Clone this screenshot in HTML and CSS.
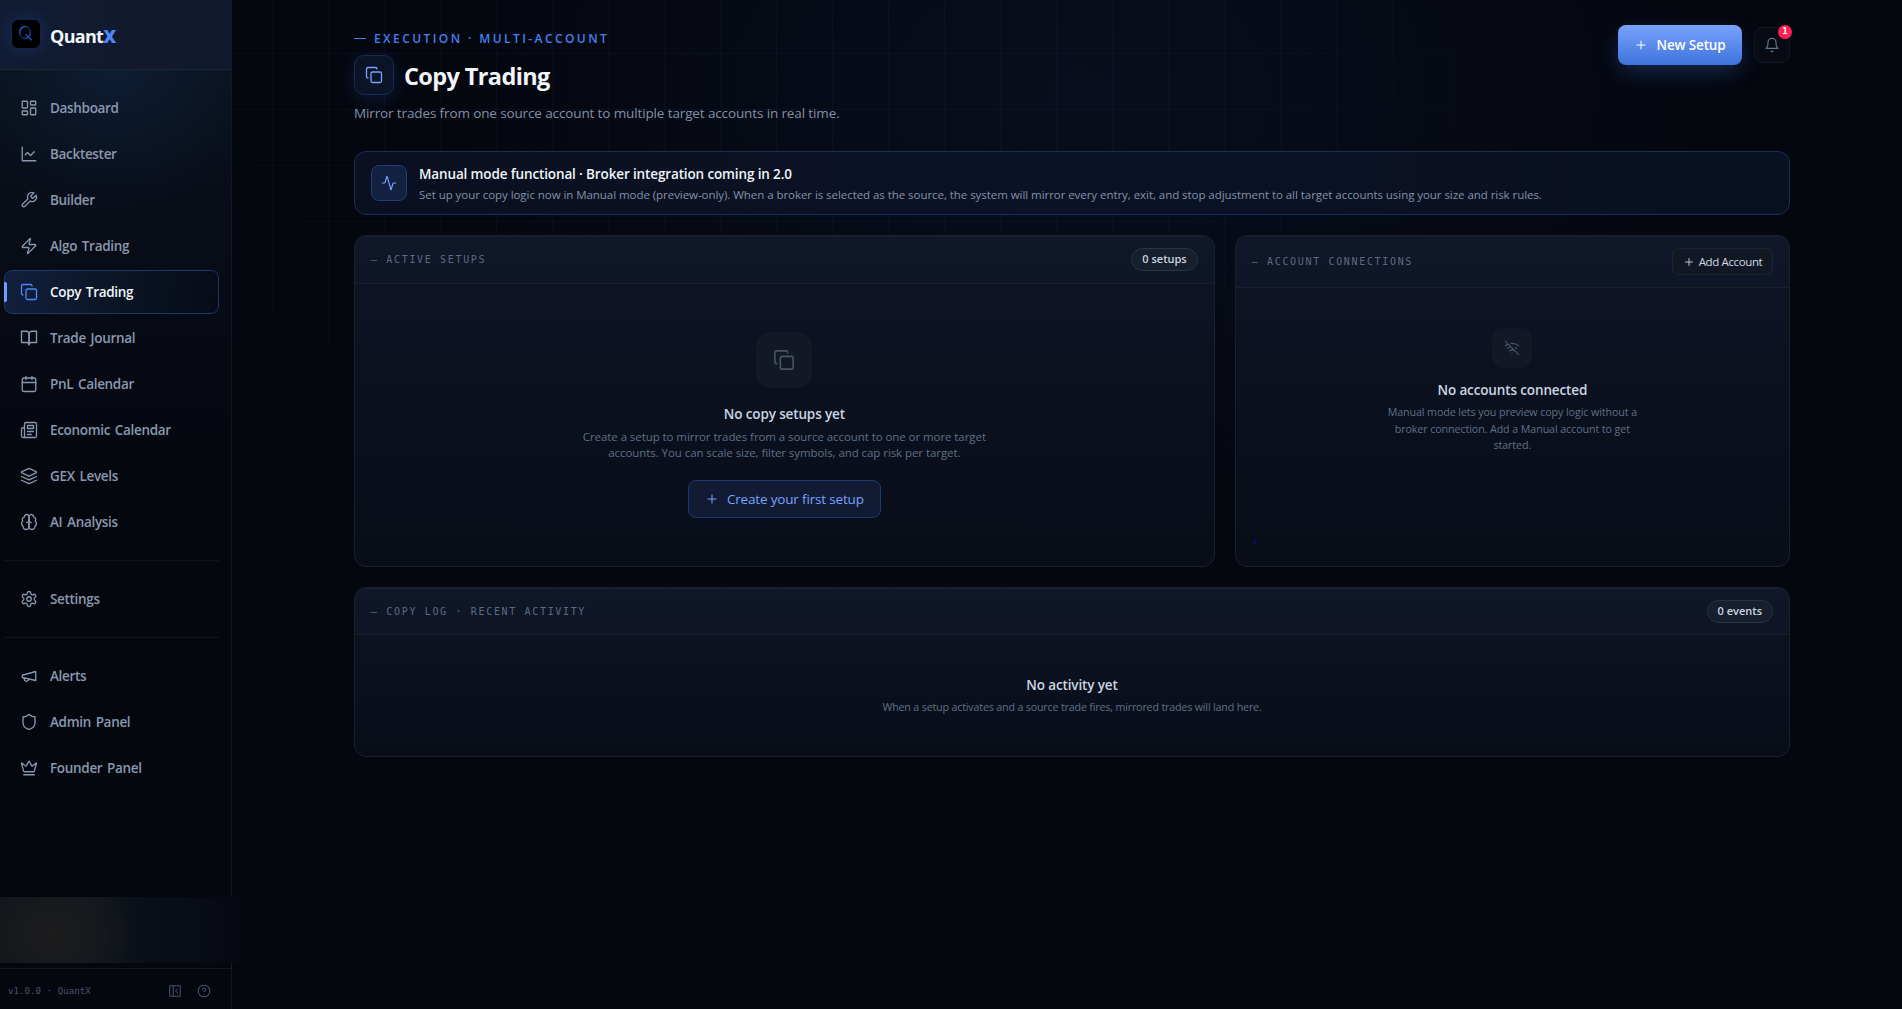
FILE: index.html
```html
<!DOCTYPE html>
<html lang="en">
<head>
<meta charset="utf-8">
<title>QuantX · Copy Trading</title>
<link rel="stylesheet" href="styles.css">
</head>
<body>
<svg width="0" height="0" class="sprite" aria-hidden="true">
  <symbol id="i-copy" viewBox="0 0 24 24"><rect width="14" height="14" x="8" y="8" rx="2"/><path d="M4 16c-1.1 0-2-.9-2-2V4c0-1.1.9-2 2-2h10c1.1 0 2 .9 2 2"/></symbol>
  <symbol id="i-plus" viewBox="0 0 24 24"><path d="M5 12h14M12 5v14"/></symbol>
</svg>
<div class="app">
  <aside class="sidebar">
    <div class="brand">
      <div class="brand-mark"><svg width="16" height="18" viewBox="0 0 16 18"><defs><linearGradient id="q" x1="0" y1="0" x2="1" y2="1"><stop offset="0" stop-color="#3b7cff"/><stop offset=".5" stop-color="#0a1a5c"/><stop offset="1" stop-color="#2f55d8"/></linearGradient></defs><ellipse cx="7" cy="7.5" rx="5.2" ry="6" fill="none" stroke="url(#q)" stroke-width="1.5"/><path d="M7.5 9.5c2 .6 3.5 4.8 6.5 5.6" fill="none" stroke="#2447b8" stroke-width="1.5"/></svg></div>
      <div class="brand-name">Quant<span>X</span></div>
    </div>
    <nav class="nav">
      <a class="item"><svg class="ico" viewBox="0 0 24 24"><rect width="7" height="9" x="3" y="3" rx="1"/><rect width="7" height="5" x="14" y="3" rx="1"/><rect width="7" height="9" x="14" y="12" rx="1"/><rect width="7" height="5" x="3" y="16" rx="1"/></svg><span>Dashboard</span></a>
      <a class="item"><svg class="ico" viewBox="0 0 24 24"><path d="M3 3v18h18"/><path d="m19 9-5 5-4-4-3 3"/></svg><span>Backtester</span></a>
      <a class="item"><svg class="ico" viewBox="0 0 24 24"><path d="M14.7 6.3a1 1 0 0 0 0 1.4l1.6 1.6a1 1 0 0 0 1.4 0l3.77-3.77a6 6 0 0 1-7.94 7.94l-6.91 6.91a2.12 2.12 0 0 1-3-3l6.91-6.91a6 6 0 0 1 7.94-7.94l-3.76 3.76z"/></svg><span>Builder</span></a>
      <a class="item"><svg class="ico" viewBox="0 0 24 24"><path d="M4 14a1 1 0 0 1-.78-1.63l9.9-10.2a.5.5 0 0 1 .86.46l-1.92 6.02A1 1 0 0 0 13 10h7a1 1 0 0 1 .78 1.63l-9.9 10.2a.5.5 0 0 1-.86-.46l1.92-6.02A1 1 0 0 0 11 14z"/></svg><span>Algo Trading</span></a>
      <a class="item active"><svg class="ico"><use href="#i-copy"/></svg><span>Copy Trading</span></a>
      <a class="item"><svg class="ico" viewBox="0 0 24 24"><path d="M2 3h6a4 4 0 0 1 4 4v14a3 3 0 0 0-3-3H2z"/><path d="M22 3h-6a4 4 0 0 0-4 4v14a3 3 0 0 1 3-3h7z"/></svg><span>Trade Journal</span></a>
      <a class="item"><svg class="ico" viewBox="0 0 24 24"><path d="M8 2v4M16 2v4M3 10h18"/><rect width="18" height="18" x="3" y="4" rx="2"/></svg><span>PnL Calendar</span></a>
      <a class="item"><svg class="ico" viewBox="0 0 24 24"><path d="M4 22h16a2 2 0 0 0 2-2V4a2 2 0 0 0-2-2H8a2 2 0 0 0-2 2v16a2 2 0 0 1-2 2Zm0 0a2 2 0 0 1-2-2v-9c0-1.1.9-2 2-2h2"/><path d="M18 14h-8M15 18h-5M10 6h8v4h-8V6Z"/></svg><span>Economic Calendar</span></a>
      <a class="item"><svg class="ico" viewBox="0 0 24 24"><path d="m12.83 2.18a2 2 0 0 0-1.66 0L2.6 6.08a1 1 0 0 0 0 1.83l8.58 3.91a2 2 0 0 0 1.66 0l8.58-3.9a1 1 0 0 0 0-1.83Z"/><path d="m22 17.65-9.17 4.16a2 2 0 0 1-1.66 0L2 17.65"/><path d="m22 12.65-9.17 4.16a2 2 0 0 1-1.66 0L2 12.65"/></svg><span>GEX Levels</span></a>
      <a class="item"><svg class="ico" viewBox="0 0 24 24"><path d="M12 5a3 3 0 1 0-5.997.125 4 4 0 0 0-2.526 5.77 4 4 0 0 0 .556 6.588A4 4 0 1 0 12 18Z"/><path d="M12 5a3 3 0 1 1 5.997.125 4 4 0 0 1 2.526 5.77 4 4 0 0 1-.556 6.588A4 4 0 1 1 12 18Z"/><path d="M15 13a4.5 4.5 0 0 1-3-4 4.5 4.5 0 0 1-3 4"/></svg><span>AI Analysis</span></a>
      <hr>
      <a class="item"><svg class="ico" viewBox="0 0 24 24"><path d="M12.22 2h-.44a2 2 0 0 0-2 2v.18a2 2 0 0 1-1 1.73l-.43.25a2 2 0 0 1-2 0l-.15-.08a2 2 0 0 0-2.73.73l-.22.38a2 2 0 0 0 .73 2.73l.15.1a2 2 0 0 1 1 1.72v.51a2 2 0 0 1-1 1.74l-.15.09a2 2 0 0 0-.73 2.73l.22.38a2 2 0 0 0 2.73.73l.15-.08a2 2 0 0 1 2 0l.43.25a2 2 0 0 1 1 1.73V20a2 2 0 0 0 2 2h.44a2 2 0 0 0 2-2v-.18a2 2 0 0 1 1-1.73l.43-.25a2 2 0 0 1 2 0l.15.08a2 2 0 0 0 2.73-.73l.22-.39a2 2 0 0 0-.73-2.73l-.15-.08a2 2 0 0 1-1-1.74v-.5a2 2 0 0 1 1-1.74l.15-.09a2 2 0 0 0 .73-2.73l-.22-.38a2 2 0 0 0-2.73-.73l-.15.08a2 2 0 0 1-2 0l-.43-.25a2 2 0 0 1-1-1.73V4a2 2 0 0 0-2-2z"/><circle cx="12" cy="12" r="3"/></svg><span>Settings</span></a>
      <hr>
      <a class="item"><svg class="ico" viewBox="0 0 24 24"><path d="m3 11 18-5v12L3 14v-3z"/><path d="M11.6 16.8a3 3 0 1 1-5.8-1.6"/></svg><span>Alerts</span></a>
      <a class="item"><svg class="ico" viewBox="0 0 24 24"><path d="M20 13c0 5-3.5 7.5-7.66 8.95a1 1 0 0 1-.67-.01C7.5 20.5 4 18 4 13V6a1 1 0 0 1 1-1c2 0 4.5-1.2 6.24-2.72a1.17 1.17 0 0 1 1.52 0C14.51 3.81 17 5 19 5a1 1 0 0 1 1 1z"/></svg><span>Admin Panel</span></a>
      <a class="item"><svg class="ico" viewBox="0 0 24 24"><path d="M11.562 3.266a.5.5 0 0 1 .876 0L15.39 8.87a1 1 0 0 0 1.516.294L21.183 5.5a.5.5 0 0 1 .798.519l-2.834 10.246a1 1 0 0 1-.956.734H5.81a1 1 0 0 1-.957-.734L2.02 6.02a.5.5 0 0 1 .798-.519l4.276 3.664a1 1 0 0 0 1.516-.294zM5 21h14"/></svg><span>Founder Panel</span></a>
    </nav>
    <div class="account"></div>
    <footer class="side-foot">
      <span class="version">v1.0.0 · QuantX</span>
      <svg class="ico s14" viewBox="0 0 24 24"><rect width="18" height="18" x="3" y="3" rx="1"/><path d="M9 3v18M16 15l-3-3 3-3"/></svg>
      <svg class="ico s14" viewBox="0 0 24 24"><circle cx="12" cy="12" r="10"/><path d="M9.09 9a3 3 0 0 1 5.83 1c0 2-3 3-3 3M12 17h.01"/></svg>
    </footer>
  </aside>

  <main class="main">
    <header class="page-head">
      <div>
        <div class="eyebrow"><i></i>EXECUTION · MULTI-ACCOUNT</div>
        <div class="title-row">
          <div class="title-ico"><svg class="ico"><use href="#i-copy"/></svg></div>
          <h1>Copy Trading</h1>
        </div>
        <p class="subtitle">Mirror trades from one source account to multiple target accounts in real time.</p>
      </div>
      <div class="actions">
        <button class="btn-primary"><svg class="ico s14"><use href="#i-plus"/></svg><span>New Setup</span></button>
        <button class="bell"><svg class="ico s16" viewBox="0 0 24 24"><path d="M6 8a6 6 0 0 1 12 0c0 7 3 9 3 9H3s3-2 3-9M10.3 21a1.94 1.94 0 0 0 3.4 0"/></svg><span class="badge">1</span></button>
      </div>
    </header>

    <section class="banner">
      <div class="banner-ico"><svg class="ico s16" viewBox="0 0 24 24"><path d="M22 12h-2.48a2 2 0 0 0-1.93 1.46l-2.35 8.36a.25.25 0 0 1-.48 0L9.24 2.18a.25.25 0 0 0-.48 0l-2.35 8.36A2 2 0 0 1 4.49 12H2"/></svg></div>
      <div>
        <h2>Manual mode functional · Broker integration coming in 2.0</h2>
        <p>Set up your copy logic now in Manual mode (preview-only). When a broker is selected as the source, the system will mirror every entry, exit, and stop adjustment to all target accounts using your size and risk rules.</p>
      </div>
    </section>

    <div class="grid">
      <section class="card">
        <div class="card-head"><span class="label">— ACTIVE SETUPS</span><span class="pill">0 setups</span></div>
        <div class="empty setups">
          <div class="empty-ico"><svg class="ico"><use href="#i-copy"/></svg></div>
          <h3>No copy setups yet</h3>
          <p>Create a setup to mirror trades from a source account to one or more target<br>accounts. You can scale size, filter symbols, and cap risk per target.</p>
          <button class="btn-soft"><svg class="ico s14"><use href="#i-plus"/></svg><span>Create your first setup</span></button>
        </div>
      </section>
      <section class="card">
        <div class="card-head"><span class="label">— ACCOUNT CONNECTIONS</span><button class="btn-ghost"><svg class="ico"><use href="#i-plus"/></svg><span>Add Account</span></button></div>
        <div class="empty accounts">
          <div class="empty-ico"><svg class="ico s16" viewBox="0 0 24 24"><path d="M12 20h.01M8.5 16.429a5 5 0 0 1 7 0M5 12.859a10 10 0 0 1 5.17-2.69M19 12.859a10 10 0 0 0-2.007-1.523M2 8.82a15 15 0 0 1 4.177-2.643M22 8.82a15 15 0 0 0-11.288-3.764M2 2l20 20"/></svg></div>
          <h3>No accounts connected</h3>
          <p>Manual mode lets you preview copy logic without a<br>broker connection. Add a Manual account to get<br>started.</p>
          <i class="dot"></i>
        </div>
      </section>
    </div>

    <section class="card log">
      <div class="card-head"><span class="label">— COPY LOG · RECENT ACTIVITY</span><span class="pill">0 events</span></div>
      <div class="empty activity">
        <h3>No activity yet</h3>
        <p>When a setup activates and a source trade fires, mirrored trades will land here.</p>
      </div>
    </section>
  </main>
</div>
</body>
</html>
```
FILE: styles.css
```css
* { box-sizing: border-box; }
body {
  margin: 0;
  height: 100vh;
  overflow: hidden;
  background: #05070f;
  color: #f1f5f9;
  font-family: "Open Sans", "Noto Sans", sans-serif;
}
h1, h2, h3, p { margin: 0; }
button { font: inherit; color: inherit; padding: 0; cursor: pointer; }
.sprite { position: absolute; }
.ico { width: 18px; height: 18px; flex: none; fill: none; stroke: currentColor; stroke-width: 1.75; stroke-linecap: round; stroke-linejoin: round; }
.s14 { width: 14px; height: 14px; }
.s16 { width: 16px; height: 16px; }

.app { display: flex; height: 100vh; position: relative; isolation: isolate;
  background: radial-gradient(ellipse 620px 420px at 1080px 90px, rgba(20, 50, 100, .16), transparent 100%); }
/* faint 56px grid, fading out towards the edges */
.app::before {
  content: ""; position: absolute; inset: 0; z-index: -1;
  background-image:
    linear-gradient(to right, rgba(130, 160, 240, .042) 1px, transparent 1px),
    linear-gradient(to bottom, rgba(130, 160, 240, .042) 1px, transparent 1px);
  background-size: 56px 56px;
  background-position: 48px 53px;
  -webkit-mask-image: radial-gradient(ellipse 1150px 760px at 760px 0, #000 35%, transparent 92%);
  mask-image: radial-gradient(ellipse 1150px 760px at 760px 0, #000 35%, transparent 92%);
}

.sidebar {
  width: 232px; flex: none; display: flex; flex-direction: column;
  border-right: 1px solid #141821;
  background:
    radial-gradient(ellipse 150px 150px at 115px 60px, rgba(25, 65, 125, .26), transparent),
    linear-gradient(180deg, #0b131d 0, #080d18 220px, #05070f 460px);
}
.brand { height: 70px; padding: 0 0 1px 12px; display: flex; align-items: center; gap: 10px;
  border-bottom: 1px solid #1b2637;
  background: linear-gradient(90deg, #101c33, #12192d 60%, #12192c); }
.brand-mark { width: 28px; height: 28px; border-radius: 6px; background: #000; display: grid; place-items: center; box-shadow: 0 0 18px rgba(70, 120, 255, .24); }
.brand-name { font-size: 18px; font-weight: 700; letter-spacing: -.7px; line-height: 24px; margin-top: 3px; }
.brand-name span { color: #4d86f8; font-weight: 800; }

.nav { flex: 1; display: flex; flex-direction: column; gap: 2px; padding: 16px 12px 0 4px; }
.item { height: 44px; flex: none; display: flex; align-items: center; gap: 12px; padding: 0 15px; border: 1px solid transparent; border-radius: 8px;
  color: #8a98ae; font-size: 13.5px; font-weight: 600; letter-spacing: -.32px; word-spacing: 1.5px; }
.item.active { position: relative; color: #f1f5f9; border-color: #1c3769;
  background: linear-gradient(100deg, #11203d, #0b1526 50%, #070b16); }
.item.active .ico { color: #4d86f8; }
.item.active::before { content: ""; position: absolute; left: -1px; top: 11px; width: 3px; height: 20px; border-radius: 0 2px 2px 0; background: #6f9cff; }
.nav hr { width: 100%; height: 1px; flex: none; border: 0; margin: 14px 0; background: #10141d; }
.account { width: 240px; height: 66px; margin-bottom: 5px; flex: none;
  background:
    radial-gradient(ellipse 85px 75px at 50px 38px, #1c1c1d, rgba(28, 28, 29, .6) 45%, transparent),
    linear-gradient(90deg, #0e131a 0, #11161f 38%, #0a0f17 62%, #060911); }
.side-foot { height: 41px; flex: none; display: flex; align-items: center; gap: 15px; padding: 4px 20px 0 8px; border-top: 1px solid #141821; color: #475569; }
.version { flex: 1; font: 9px "DejaVu Sans Mono", monospace; letter-spacing: .1px; }

.main { flex: 1; padding: 25px 112px 0 122px; }
.page-head { height: 126px; display: flex; justify-content: space-between; align-items: flex-start; }
.eyebrow { display: flex; align-items: center; gap: 8px; height: 18px; margin: 4px 0 8px; color: #4380f0; font-size: 12px; font-weight: 600; letter-spacing: 2.42px; }
.eyebrow i { width: 12px; height: 1px; background: currentColor; }
.title-row { display: flex; align-items: center; gap: 10px; }
.title-ico { width: 40px; height: 40px; display: grid; place-items: center; border: 1px solid #182c52; border-radius: 10px; background: #0b1426; color: #7aa2ff; box-shadow: 0 4px 18px rgba(60, 110, 240, .18); }
h1 { padding-top: 2px; font-size: 23.5px; line-height: 32px; font-weight: 700; letter-spacing: -.62px; }
.subtitle { margin-top: 7px; font-size: 13.5px; line-height: 22px; letter-spacing: -.125px; color: #8391a7; }
.actions { display: flex; align-items: center; gap: 12px; }
.btn-primary { width: 124px; height: 40px; display: flex; align-items: center; justify-content: center; gap: 8px; border: 0; border-radius: 8px; background: linear-gradient(#7aa2ff, #3d73da); color: #fff; font-size: 13.5px; font-weight: 600; letter-spacing: -.15px; box-shadow: 0 8px 24px -4px rgba(70, 130, 255, .32); }
.bell { position: relative; width: 36px; height: 36px; display: grid; place-items: center; border: 1px solid #13171f; border-radius: 8px; background: #080b13; color: #64748b; }
.badge { position: absolute; right: -3px; top: -3px; width: 14px; height: 14px; border-radius: 7px; background: #ff1f55; color: #fff; font: 700 9px/13px "DejaVu Sans Mono", monospace; text-align: center; }

.banner { height: 64px; display: flex; align-items: center; gap: 12px; padding: 0 16px; border: 1px solid #192f5a; border-radius: 12px; background: linear-gradient(90deg, #0a1020, #0c1226 50%, #091020); }
.banner-ico { width: 36px; height: 36px; margin-top: -1px; flex: none; display: grid; place-items: center; border: 1px solid #203f78; border-radius: 8px; background: #12213f; color: #7aa2ff; }
.banner h2 { font-size: 13.5px; line-height: 20px; font-weight: 600; letter-spacing: -.13px; padding-top: 2px; }
.banner p { font-size: 11.5px; line-height: 18px; letter-spacing: -.053px; color: #8391a7; white-space: nowrap; margin-top: 2px; }

.grid { display: grid; grid-template-columns: 1.55fr 1fr; gap: 20px; height: 332px; margin: 20px 0; }
.card { display: flex; flex-direction: column; border: 1px solid #1a202c; border-radius: 12px; background: linear-gradient(180deg, #0e1526, #0b101d 55%, #090d18); box-shadow: inset 0 1px 0 #181e2b; }
.card-head { height: 48px; flex: none; display: flex; align-items: center; justify-content: space-between; padding: 0 16px; border-bottom: 1px solid #181f2d; background: rgba(22, 30, 56, .22); border-radius: 11px 11px 0 0; }
.grid .card:last-child .card-head { height: 52px; }
.label { font: 10px "DejaVu Sans Mono", monospace; letter-spacing: 1.66px; color: #5c6b82; }
.pill { height: 23px; padding: 0 10px; border: 1px solid #2a3341; border-radius: 12px; background: #171e2d; font-size: 11px; line-height: 20px; font-weight: 600; color: #cbd5e1; }
.btn-ghost { width: 101px; height: 27px; display: flex; align-items: center; justify-content: center; gap: 4px; border: 1px solid #1e2532; border-radius: 7px; background: #111824; color: #d0d8e3; font-size: 11.5px; letter-spacing: -.38px; white-space: nowrap; }
.btn-ghost .ico { width: 12px; height: 12px; }
.empty { flex: 1; display: flex; flex-direction: column; align-items: center; text-align: center; position: relative; }
.empty h3 { font-size: 13.5px; line-height: 20px; font-weight: 600; letter-spacing: -.13px; color: #cbd5e1; }
.empty p { color: #5f6f88; white-space: nowrap; }
.empty-ico { display: grid; place-items: center; background: #131825; color: #475569; }
.setups { padding-top: 48px; }
.setups .empty-ico { width: 56px; height: 56px; border-radius: 14px; margin-bottom: 16px; }
.setups .empty-ico .ico { width: 22px; height: 22px; }
.setups p { font-size: 11.5px; line-height: 16.2px; letter-spacing: -.07px; margin-top: 5px; }
.btn-soft { width: 193px; height: 38px; margin-top: 19px; display: flex; align-items: center; justify-content: center; gap: 8px; border: 1px solid #1e3a70; border-radius: 8px; background: #111b33; color: #7aa2ff; font-size: 13.5px; letter-spacing: -.17px; }
.accounts { padding-top: 40px; }
.accounts .empty-ico { width: 40px; height: 40px; border-radius: 10px; margin-bottom: 12px; }
.accounts p, .activity p { font-size: 10.7px; line-height: 16.5px; letter-spacing: -.09px; margin-top: 4px; }
.activity p { letter-spacing: -.17px; }
.dot { position: absolute; left: 18px; top: 253px; width: 2px; height: 2px; background: #0000d8; }
.log { height: 170px; }
.log .card-head { height: 47px; }
.activity { padding-top: 40px; }
```
